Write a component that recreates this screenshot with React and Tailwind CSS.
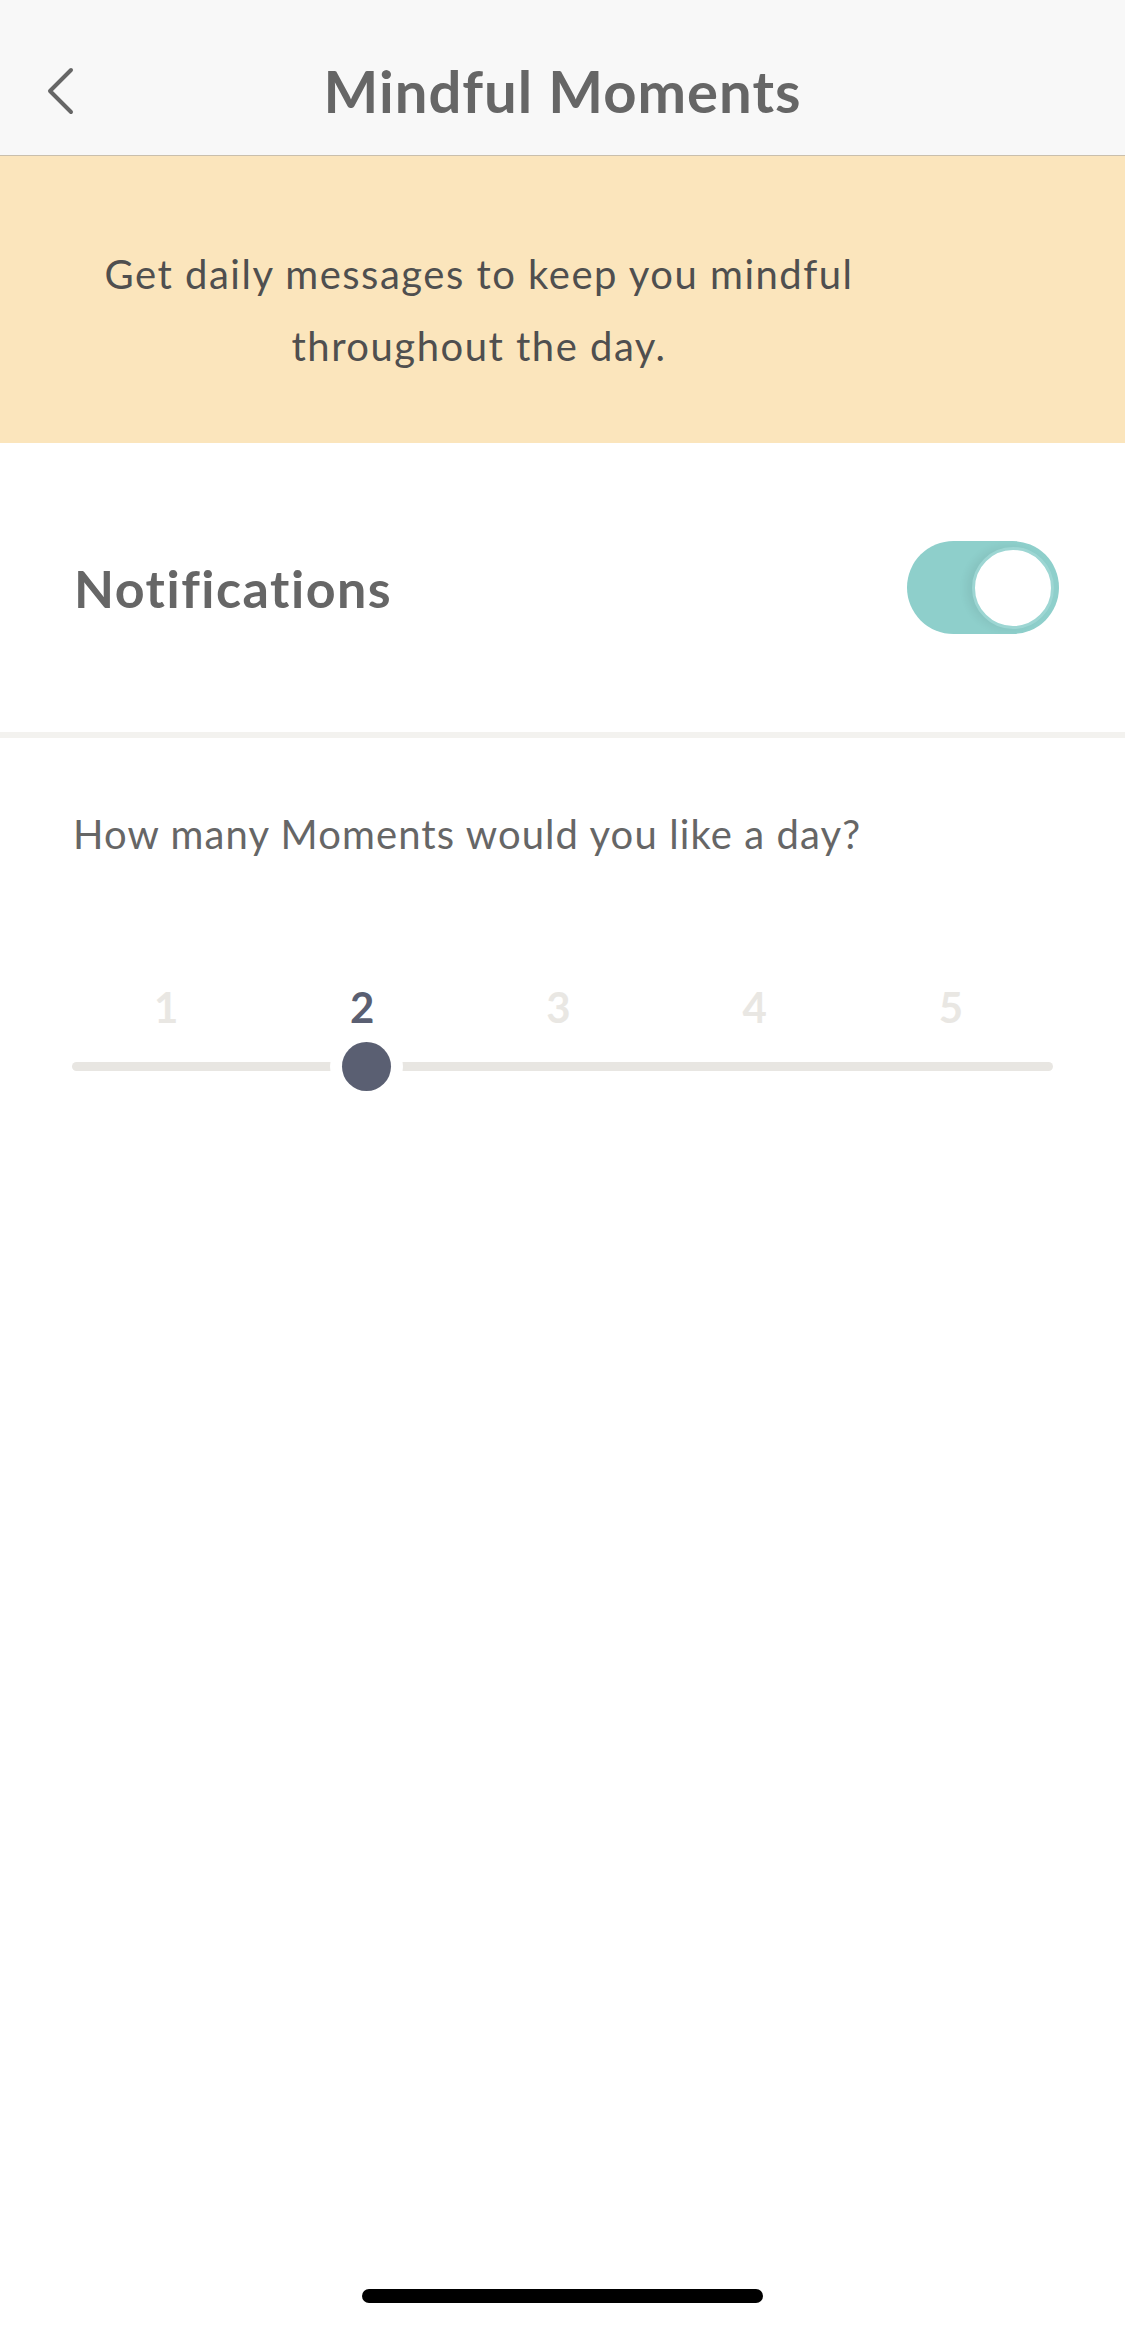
export default function App() {
  const values = [1, 2, 3, 4, 5];
  const selected = 2;

  return (
    <div className="flex flex-col h-[2328px] w-full bg-white font-['Lato','Open_Sans',sans-serif]">
      {/* Header */}
      <div className="h-[156px] bg-[#f8f8f8] border-b border-[#c9bfad] grid grid-cols-[1fr_auto_1fr] items-center pt-[26px]">
        <div className="pl-[46px]">
          <svg width="28" height="48" viewBox="0 0 28 48" fill="none" stroke="#666666" strokeWidth="4" strokeLinecap="round" strokeLinejoin="round">
            <polyline points="25,3 4,24 25,45" />
          </svg>
        </div>
        <h1 className="text-[58px] font-bold text-[#666666] leading-none tracking-[1px]">Mindful Moments</h1>
        <div />
      </div>

      {/* Banner */}
      <div className="h-[287px] bg-[#fbe5bc] pt-[82px]">
        <p className="ml-[74px] w-[810px] text-center text-[40px] leading-[72px] tracking-[1.5px] text-[#4f4f4f]">
          Get daily messages to keep you mindful
          <br />
          throughout the day.
        </p>
      </div>

      {/* Notifications */}
      <div className="h-[289px] flex items-center justify-between pl-[74px] pr-[66px]">
        <span className="text-[52px] font-bold tracking-[1.5px] text-[#666666]">Notifications</span>
        <div className="w-[152px] h-[93px] rounded-full bg-[#8ecfcb] flex items-center justify-end pr-[5px]">
          <div className="w-[82px] h-[82px] rounded-full bg-white border-[3px] border-[#9dd6d3] shadow-[-6px_0_8px_rgba(0,0,0,0.06)]" />
        </div>
      </div>

      <div className="h-[6px] bg-[#f3f2ef]" />

      {/* Moments per day */}
      <div className="pt-[72px] pl-[73px]">
        <p className="text-[40px] leading-[48px] tracking-[1.1px] text-[#666666]">How many Moments would you like a day?</p>
      </div>

      <div className="mt-[124px]">
        <div className="ml-[68px] w-[981px] grid grid-cols-5 text-center">
          {values.map((v) => (
            <span
              key={v}
              className={`text-[42px] leading-[50px] font-bold ${v === selected ? "text-[#5a5f72]" : "text-[#e9e7e3]"}`}
            >
              {v}
            </span>
          ))}
        </div>
        <div className="relative ml-[72px] w-[981px] h-[73px] -mt-[2px] flex items-center">
          <div className="w-full h-[9px] rounded-full bg-[#e8e6e2]" />
          <div className="absolute left-[258px] top-0 w-[73px] h-[73px] rounded-full bg-white flex items-center justify-center">
            <div className="w-[49px] h-[49px] rounded-full bg-[#5a5f72]" />
          </div>
        </div>
      </div>

      {/* Home indicator */}
      <div className="mt-auto mb-[25px] mx-auto w-[401px] h-[14px] rounded-full bg-black" />
    </div>
  );
}
